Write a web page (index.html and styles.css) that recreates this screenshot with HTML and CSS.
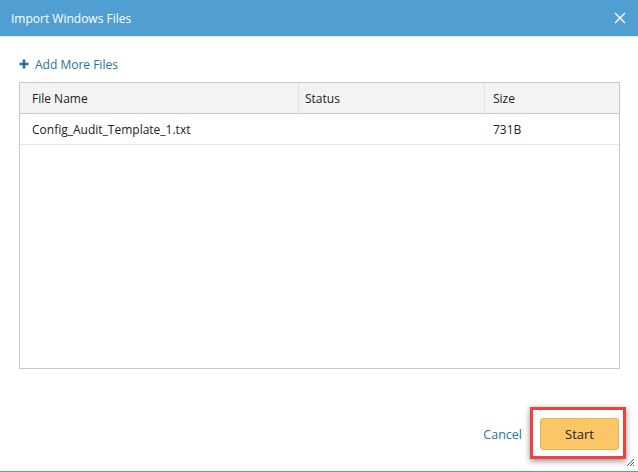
FILE: index.html
```html
<!DOCTYPE html>
<html>
<head>
<meta charset="utf-8">
<link rel="stylesheet" href="styles.css">
</head>
<body>
<div class="dialog">
  <div class="titlebar">
    <span class="title">Import Windows Files</span>
    <svg class="close" width="12" height="12" viewBox="0 0 12 12"><path d="M1 1L11 11M11 1L1 11" stroke="#fff" stroke-width="1.4"/></svg>
  </div>
  <div class="body">
    <a class="add">
      <svg width="10" height="10" viewBox="0 0 10 10"><path d="M5 0.5V9.5M0.5 5H9.5" stroke="#2a6fa8" stroke-width="2.6"/></svg>
      <span>Add More Files</span>
    </a>
    <div class="grid">
      <div class="row head">
        <div class="c c1">File Name</div>
        <div class="c c2">Status</div>
        <div class="c c3">Size</div>
      </div>
      <div class="row">
        <div class="c c1">Config_Audit_Template_1.txt</div>
        <div class="c c2"></div>
        <div class="c c3">731B</div>
      </div>
    </div>
  </div>
  <div class="footer">
    <a class="cancel">Cancel</a>
    <div class="highlight"><button class="start">Start</button></div>
  </div>
  <svg class="grip" width="9" height="9" viewBox="0 0 9 9"><path d="M8 1L1 8M8 4L4 8M8 7L7 8" stroke="#555" stroke-width="1"/></svg>
</div>
</body>
</html>
```

FILE: styles.css
```css
html, body {
  margin: 0;
  padding: 0;
  background: #fff;
}
body {
  font-family: "Open Sans", "Segoe UI", sans-serif;
  font-size: 12px;
  color: #222;
}
.dialog {
  width: 638px;
  height: 472px;
  position: relative;
  display: flex;
  flex-direction: column;
  box-sizing: border-box;
  border-bottom: 1px solid #519ed2;
}
.titlebar {
  height: 36px;
  background: #519ed2;
  border-bottom: 1px solid #e3e3e3;
  display: flex;
  align-items: center;
  justify-content: space-between;
  padding: 0 11px 0 11px;
  color: #fff;
}
.title {
  font-size: 12px;
}
.close {
  margin-right: 1px;
}
.body {
  padding: 19px 18px 0 19px;
  display: flex;
  flex-direction: column;
}
.add {
  display: flex;
  align-items: center;
  gap: 6px;
  color: #2a6fa8;
  font-size: 12px;
  height: 16px;
  margin-bottom: 10px;
}
.grid {
  height: 287px;
  border: 1px solid #c8c8c8;
  box-sizing: border-box;
  width: 601px;
}
.row {
  display: flex;
  height: 30px;
  border-bottom: 1px solid #e6e6e6;
}
.row.head {
  height: 30px;
  background: #f3f3f3;
  border-bottom: 1px solid #c8c8c8;
}
.c {
  display: flex;
  align-items: center;
  padding-left: 12px;
  box-sizing: border-box;
}
.c1 { width: 278px; }
.c2 { width: 186px; padding-left: 7px; }
.c3 { flex: 1; padding-left: 9px; }
.head .c2, .head .c3 { border-left: 1px solid #e3e3e3; padding-left: 6px; }
.head .c3 { padding-left: 8px; }
.footer {
  margin-top: auto;
  display: flex;
  align-items: center;
  justify-content: flex-end;
  padding: 0 12px 12px 0;
  gap: 8px;
}
.cancel {
  color: #2a6fa8;
  font-size: 12.5px;
  margin-top: 2px;
}
.highlight {
  border: 3px solid #f04040;
  padding: 8px 4px 6px 7px;
  box-shadow: 0 2px 6px rgba(0,0,0,0.45);
}
.start {
  width: 79px;
  height: 32px;
  background: #fbc766;
  border: 1px solid #e8b450;
  border-radius: 3px;
  font-family: "Open Sans", sans-serif;
  font-size: 13px;
  color: #222;
  padding: 0;
  display: block;
}
.grip {
  position: absolute;
  right: 3px;
  bottom: 4px;
}
```
